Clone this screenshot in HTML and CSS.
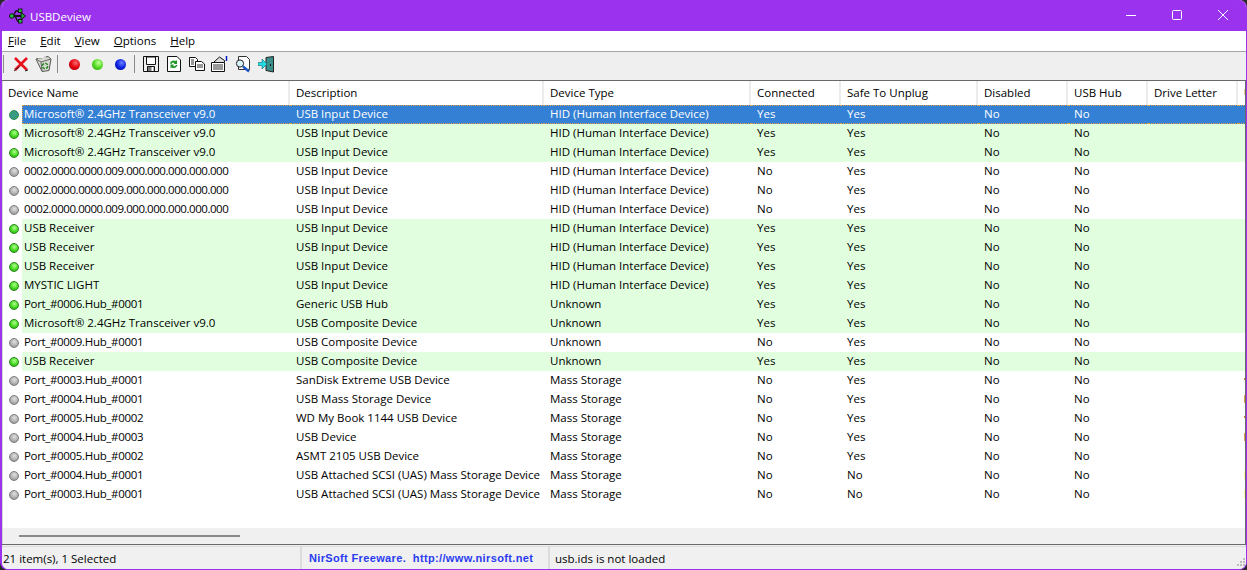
FILE: index.html
```html
<!DOCTYPE html>
<html lang="en">
<head>
<meta charset="utf-8">
<title>USBDeview</title>
<link rel="stylesheet" href="styles.css">
</head>
<body>
<div class="window">
  <header class="titlebar">
    <svg class="app-icon" width="17" height="16" viewBox="0 0 17 16">
      <path d="M2 8h12" stroke="#111" stroke-width="2"/>
      <path d="M12 4.500l4.500 3.500-4.500 3.500z" fill="#1fa838" stroke="#111"/>
      <path d="M4 8l3-5h3M6 8l2.500 5h2" fill="none" stroke="#111" stroke-width="1.300"/>
      <circle cx="2.800" cy="8" r="2.300" fill="#22c040" stroke="#111"/>
      <rect x="9.500" y="1" width="3.500" height="3.500" fill="#22c040" stroke="#111" stroke-width=".9"/>
      <rect x="9.500" y="11.500" width="3.500" height="3.500" fill="#22c040" stroke="#111" stroke-width=".9"/>
    </svg>
    <span class="title-text">USBDeview</span>
    <div class="win-controls">
      <svg class="win-btn" width="46" height="31" viewBox="0 0 46 31"><path d="M18 15.500h10" stroke="#fff"/></svg>
      <svg class="win-btn" width="46" height="31" viewBox="0 0 46 31"><rect x="18.500" y="10.500" width="9" height="9" rx="1" fill="none" stroke="#fff"/></svg>
      <svg class="win-btn" width="46" height="31" viewBox="0 0 46 31"><path d="M18 10l10 10M28 10l-10 10" stroke="#fff"/></svg>
    </div>
  </header>
  <nav class="menubar">
    <span class="menu"><u>F</u>ile</span>
    <span class="menu"><u>E</u>dit</span>
    <span class="menu"><u>V</u>iew</span>
    <span class="menu"><u>O</u>ptions</span>
    <span class="menu"><u>H</u>elp</span>
  </nav>
  <div class="toolbar">
    <span class="tsep first"></span>
    <div class="group g1">
      <span class="tbtn"><svg width="16" height="15" viewBox="0 0 16 15"><path d="M2 1l12 12M14 1L2 13" stroke="#e8101c" stroke-width="2.600"/><path d="M1 14l5-4M12 14l3-1" stroke="#222" stroke-width="1"/></svg></span>
      <span class="tbtn"><svg width="17" height="16" viewBox="0 0 17 16"><path d="M1 3l12-2.500L16 3l-2 11.500-7 1z" fill="#d9d9d2" stroke="#555"/><path d="M1 3l5 3 10-3M6 6l1 9" fill="none" stroke="#666"/><path d="M3 2l8-1" stroke="#fff"/><circle cx="10" cy="10" r="2.700" fill="none" stroke="#2a8a2a" stroke-width="1.600" stroke-dasharray="3 1.200"/></svg></span>
    </div>
    <span class="tsep"></span>
    <div class="group g2">
      <span class="tbtn"><span class="ball red"></span></span>
      <span class="tbtn"><span class="ball green"></span></span>
      <span class="tbtn"><span class="ball blue"></span></span>
    </div>
    <span class="tsep"></span>
    <div class="group g3">
      <span class="tbtn"><svg width="16" height="16" viewBox="0 0 16 16"><path d="M.5.500h15v15H.5z" fill="#efefef" stroke="#111"/><path d="M3.500 1v7.500h9V1z" fill="#fff" stroke="#111"/><path d="M4.500 10.500h7v5h-7z" fill="#777" stroke="#111"/><path d="M8.500 11h2v4h-2z" fill="#fff"/></svg></span>
      <span class="tbtn"><svg width="14" height="16" viewBox="0 0 14 16"><path d="M.5.500h9.500l3.500 3.500v11.500H.5z" fill="#fff" stroke="#111"/><path d="M3 7.500a4 3.500 0 0 1 6-2.500l1-1v4H6.500l1-1a2 2 0 0 0-3 1z" fill="#1f9a2a"/><path d="M10.500 9a4 3.500 0 0 1-6 2.500l-1 1V8.500H7l-1 1a2 2 0 0 0 3-.5z" fill="#1f9a2a"/></svg></span>
      <span class="tbtn"><svg width="16" height="14" viewBox="0 0 16 14"><path d="M.5.500h6l2 2v7H.5z" fill="#fff" stroke="#111"/><path d="M6.500 4.500h6l3 2.500v6.500h-9z" fill="#fff" stroke="#111"/><path d="M8 8h6M8 10h6M2 3h3M2 5h3M2 7h3" stroke="#333"/></svg></span>
      <span class="tbtn"><svg width="17" height="16" viewBox="0 0 17 16"><path d="M.5 6.500h13v9H.5z" fill="#fff" stroke="#111"/><path d="M2 9h10M2 11h10M2 13h10" stroke="#333"/><path d="M3 6l5.500-5 5 3.500V6" fill="#ddd" stroke="#111"/><path d="M15.500 0v5" stroke="#0018c8" stroke-width="1.500"/></svg></span>
      <span class="tbtn"><svg width="16" height="17" viewBox="0 0 16 17"><path d="M3.500.500h8l3 3v10h-11z" fill="#fff" stroke="#333"/><circle cx="5" cy="7.500" r="3.600" fill="#d8f2fb" stroke="#222"/><path d="M8 10.500l6 5" stroke="#1c55c8" stroke-width="2.400"/></svg></span>
      <span class="tbtn"><svg width="16" height="17" viewBox="0 0 16 17"><path d="M8 1.500l7.500-1V16L8 14.500z" fill="#3a8f8a" stroke="#222"/><path d="M0 6.500h4V3l5 5-5 5V9.500H0z" fill="#23dbe6" stroke="#0a6a70" stroke-width=".6"/><path d="M12.500 8v2" stroke="#111"/></svg></span>
    </div>
  </div>
  <section class="list">
    <div class="list-clip">
      <div class="row head">
        <div class="cell">Device Name</div><div class="cell">Description</div><div class="cell">Device Type</div><div class="cell">Connected</div><div class="cell">Safe To Unplug</div><div class="cell">Disabled</div><div class="cell">USB Hub</div><div class="cell">Drive Letter</div><div class="cell"><span class="tick head-tick"></span></div>
      </div>
      <div class="row selected"><div class="cell name"><span class="dot sel"></span><span class="label">Microsoft® 2.4GHz Transceiver v9.0</span></div><div class="cell">USB Input Device</div><div class="cell">HID (Human Interface Device)</div><div class="cell">Yes</div><div class="cell">Yes</div><div class="cell">No</div><div class="cell">No</div><div class="cell"></div><div class="cell"></div></div>
      <div class="row on"><div class="cell name"><span class="dot on"></span><span class="label">Microsoft® 2.4GHz Transceiver v9.0</span></div><div class="cell">USB Input Device</div><div class="cell">HID (Human Interface Device)</div><div class="cell">Yes</div><div class="cell">Yes</div><div class="cell">No</div><div class="cell">No</div><div class="cell"></div><div class="cell"></div></div>
      <div class="row on"><div class="cell name"><span class="dot on"></span><span class="label">Microsoft® 2.4GHz Transceiver v9.0</span></div><div class="cell">USB Input Device</div><div class="cell">HID (Human Interface Device)</div><div class="cell">Yes</div><div class="cell">Yes</div><div class="cell">No</div><div class="cell">No</div><div class="cell"></div><div class="cell"></div></div>
      <div class="row"><div class="cell name"><span class="dot off"></span><span class="label zeros">0002.0000.0000.009.000.000.000.000.000</span></div><div class="cell">USB Input Device</div><div class="cell">HID (Human Interface Device)</div><div class="cell">No</div><div class="cell">Yes</div><div class="cell">No</div><div class="cell">No</div><div class="cell"></div><div class="cell"></div></div>
      <div class="row"><div class="cell name"><span class="dot off"></span><span class="label zeros">0002.0000.0000.009.000.000.000.000.000</span></div><div class="cell">USB Input Device</div><div class="cell">HID (Human Interface Device)</div><div class="cell">No</div><div class="cell">Yes</div><div class="cell">No</div><div class="cell">No</div><div class="cell"></div><div class="cell"></div></div>
      <div class="row"><div class="cell name"><span class="dot off"></span><span class="label zeros">0002.0000.0000.009.000.000.000.000.000</span></div><div class="cell">USB Input Device</div><div class="cell">HID (Human Interface Device)</div><div class="cell">No</div><div class="cell">Yes</div><div class="cell">No</div><div class="cell">No</div><div class="cell"></div><div class="cell"></div></div>
      <div class="row on"><div class="cell name"><span class="dot on"></span><span class="label">USB Receiver</span></div><div class="cell">USB Input Device</div><div class="cell">HID (Human Interface Device)</div><div class="cell">Yes</div><div class="cell">Yes</div><div class="cell">No</div><div class="cell">No</div><div class="cell"></div><div class="cell"></div></div>
      <div class="row on"><div class="cell name"><span class="dot on"></span><span class="label">USB Receiver</span></div><div class="cell">USB Input Device</div><div class="cell">HID (Human Interface Device)</div><div class="cell">Yes</div><div class="cell">Yes</div><div class="cell">No</div><div class="cell">No</div><div class="cell"></div><div class="cell"></div></div>
      <div class="row on"><div class="cell name"><span class="dot on"></span><span class="label">USB Receiver</span></div><div class="cell">USB Input Device</div><div class="cell">HID (Human Interface Device)</div><div class="cell">Yes</div><div class="cell">Yes</div><div class="cell">No</div><div class="cell">No</div><div class="cell"></div><div class="cell"></div></div>
      <div class="row on"><div class="cell name"><span class="dot on"></span><span class="label">MYSTIC LIGHT</span></div><div class="cell">USB Input Device</div><div class="cell">HID (Human Interface Device)</div><div class="cell">Yes</div><div class="cell">Yes</div><div class="cell">No</div><div class="cell">No</div><div class="cell"></div><div class="cell"></div></div>
      <div class="row on"><div class="cell name"><span class="dot on"></span><span class="label port">Port_#0006.Hub_#0001</span></div><div class="cell">Generic USB Hub</div><div class="cell">Unknown</div><div class="cell">Yes</div><div class="cell">Yes</div><div class="cell">No</div><div class="cell">No</div><div class="cell"></div><div class="cell"></div></div>
      <div class="row on"><div class="cell name"><span class="dot on"></span><span class="label">Microsoft® 2.4GHz Transceiver v9.0</span></div><div class="cell">USB Composite Device</div><div class="cell">Unknown</div><div class="cell">Yes</div><div class="cell">Yes</div><div class="cell">No</div><div class="cell">No</div><div class="cell"></div><div class="cell"></div></div>
      <div class="row"><div class="cell name"><span class="dot off"></span><span class="label port">Port_#0009.Hub_#0001</span></div><div class="cell">USB Composite Device</div><div class="cell">Unknown</div><div class="cell">No</div><div class="cell">Yes</div><div class="cell">No</div><div class="cell">No</div><div class="cell"></div><div class="cell"></div></div>
      <div class="row on"><div class="cell name"><span class="dot on"></span><span class="label">USB Receiver</span></div><div class="cell">USB Composite Device</div><div class="cell">Unknown</div><div class="cell">Yes</div><div class="cell">Yes</div><div class="cell">No</div><div class="cell">No</div><div class="cell"></div><div class="cell"></div></div>
      <div class="row"><div class="cell name"><span class="dot off"></span><span class="label port">Port_#0003.Hub_#0001</span></div><div class="cell">SanDisk Extreme USB Device</div><div class="cell">Mass Storage</div><div class="cell">No</div><div class="cell">Yes</div><div class="cell">No</div><div class="cell">No</div><div class="cell"></div><div class="cell"><span class="tick small"></span></div></div>
      <div class="row"><div class="cell name"><span class="dot off"></span><span class="label port">Port_#0004.Hub_#0001</span></div><div class="cell">USB Mass Storage Device</div><div class="cell">Mass Storage</div><div class="cell">No</div><div class="cell">Yes</div><div class="cell">No</div><div class="cell">No</div><div class="cell"></div><div class="cell"><span class="tick tall"></span></div></div>
      <div class="row"><div class="cell name"><span class="dot off"></span><span class="label port">Port_#0005.Hub_#0002</span></div><div class="cell">WD My Book 1144 USB Device</div><div class="cell">Mass Storage</div><div class="cell">No</div><div class="cell">Yes</div><div class="cell">No</div><div class="cell">No</div><div class="cell"></div><div class="cell"><span class="tick small"></span></div></div>
      <div class="row"><div class="cell name"><span class="dot off"></span><span class="label port">Port_#0004.Hub_#0003</span></div><div class="cell">USB Device</div><div class="cell">Mass Storage</div><div class="cell">No</div><div class="cell">Yes</div><div class="cell">No</div><div class="cell">No</div><div class="cell"></div><div class="cell"><span class="tick tall"></span></div></div>
      <div class="row"><div class="cell name"><span class="dot off"></span><span class="label port">Port_#0005.Hub_#0002</span></div><div class="cell">ASMT 2105 USB Device</div><div class="cell">Mass Storage</div><div class="cell">No</div><div class="cell">Yes</div><div class="cell">No</div><div class="cell">No</div><div class="cell"></div><div class="cell"></div></div>
      <div class="row"><div class="cell name"><span class="dot off"></span><span class="label port">Port_#0004.Hub_#0001</span></div><div class="cell">USB Attached SCSI (UAS) Mass Storage Device</div><div class="cell">Mass Storage</div><div class="cell">No</div><div class="cell">No</div><div class="cell">No</div><div class="cell">No</div><div class="cell"></div><div class="cell"><span class="tick yellow"></span></div></div>
      <div class="row"><div class="cell name"><span class="dot off"></span><span class="label port">Port_#0003.Hub_#0001</span></div><div class="cell">USB Attached SCSI (UAS) Mass Storage Device</div><div class="cell">Mass Storage</div><div class="cell">No</div><div class="cell">No</div><div class="cell">No</div><div class="cell">No</div><div class="cell"></div><div class="cell"><span class="tick yellow"></span></div></div>
    </div>
    <div class="hscroll"><span class="thumb"></span></div>
  </section>
  <footer class="statusbar">
    <div class="pane count">21 item(s), 1 Selected</div>
    <div class="pane link">NirSoft Freeware.&nbsp; http://www.nirsoft.net</div>
    <div class="pane info">usb.ids is not loaded</div>
    <svg class="grip" width="9" height="9" viewBox="0 0 9 9"><path d="M6 0h2v2H6zM3 3h2v2H3zM6 3h2v2H6zM0 6h2v2H0zM3 6h2v2H3zM6 6h2v2H6z" fill="#bdbdbd"/></svg>
  </footer>
</div>
</body>
</html>
```
FILE: styles.css
```css
* { box-sizing: border-box; }
html, body { margin: 0; padding: 0; height: 100%; overflow: hidden; background: #2a2a2a; }
body { font: 11.5px "Open Sans", "Liberation Sans", sans-serif; color: #000; }
.window { width: 1247px; height: 570px; background: #f0f0f0; border: solid #9b33ee; border-width: 0 1px 1px 2px; border-radius: 8px; display: flex; flex-direction: column; overflow: hidden; }
.titlebar { height: 31px; flex: none; margin: 0 -1px 0 -2px; background: #9b33ee; color: #fff; display: flex; align-items: center; padding: 1px 1px 0 9px; }
.app-icon { margin-right: 4px; }
.title-text { font-size: 11.5px; }
.win-controls { margin: -1px 0 0 auto; display: flex; }
.win-btn { display: block; }
.menubar { height: 20px; flex: none; background: #fff; display: flex; align-items: center; padding: 0 0 1px 6px; gap: 14px; }
.toolbar { height: 30px; flex: none; background: #efefef; border-top: 1px solid #a5a5a5; border-bottom: 1px solid #696969; display: flex; align-items: center; padding: 0 0 4px 1px; }
.tsep { width: 1px; height: 18px; background: #8a8a8a; }
.group { display: flex; align-items: center; }
.g1 { margin: 0 2px 0 5px; }
.g2 { margin: 0 2px 0 5px; }
.g3 { margin-left: 4px; }
.tbtn { width: 23px; height: 18px; display: flex; align-items: center; justify-content: center; }
.tbtn svg { display: block; }
.ball { width: 11px; height: 11px; border-radius: 50%; }
.ball.red { background: radial-gradient(circle at 60% 35%, #ff6a6a, #e0000e 50%, #a0000a); }
.ball.green { background: radial-gradient(circle at 60% 35%, #c4ff9a, #4fdb20 50%, #2f9a10); }
.ball.blue { background: radial-gradient(circle at 60% 35%, #6a80ff, #0c1fe0 50%, #05109a); }
.list { flex: 1; min-height: 0; display: flex; flex-direction: column; background: #fff; border-left: 1px solid #d4d4d4; border-right: 1px solid #696969; }
.list-clip { flex: 1; min-height: 0; overflow: hidden; }
.row { display: grid; grid-template-columns: 287px 254px 207px 90px 137px 90px 80px 90px 90px; height: 19px; line-height: 18px; white-space: nowrap; }
.row.head { height: 24px; line-height: 24px; background: #fff; }
.row.head .cell { border-right: 2px solid #ececec; padding-left: 6px; }
.row.head .cell:first-child { padding-left: 5px; }
.row.on .cell:not(.name), .row.on .label { background: #e1ffdf; }
.row.selected { color: #fff; }
.row.selected .cell:not(.name), .row.selected .label { background: #3480d4; border-top: 1px dotted #e6a040; border-bottom: 1px dotted #e6a040; line-height: 16px; }
.row.selected .label { border-left: 1px dotted #e6a040; padding-left: 1px; }
.cell { padding-left: 6px; overflow: hidden; }
.cell.name { display: flex; align-items: center; padding-left: 6px; }
.label { flex: 1; height: 19px; padding-left: 2px; }
.zeros { letter-spacing: -.45px; }
.port { letter-spacing: -.33px; }
.dot { width: 10px; height: 10px; border-radius: 50%; flex: none; margin-right: 3px; }
.dot.on { background: radial-gradient(circle at 55% 35%, #b0ff90, #46d820 55%, #1f8f10); border: 1px solid #2a8a1a; }
.dot.off { background: radial-gradient(circle at 55% 35%, #e0e0e0, #b0b0b0 55%, #808080); border: 1px solid #7d7d7d; }
.dot.sel { background: repeating-conic-gradient(#2a70d0 0 25%, #46c830 0 50%) 0 0 / 2px 2px; border: 1px solid #2a8a50; }
.tick { display: block; width: 1px; background: #d98a20; }
.tick.small { height: 2px; margin-top: 7px; background: #c87820; }
.tick.tall { height: 8px; margin-top: 5px; background: #e0a050; }
.tick.yellow { height: 8px; margin-top: 5px; background: #fff6a0; }
.tick.head-tick { height: 6px; margin-top: 8px; background: #e8c890; }
.hscroll { height: 16px; flex: none; background: #f0f0f0; display: flex; align-items: center; }
.thumb { width: 221px; height: 2px; background: #8a8a8a; margin-left: 16px; }
.statusbar { height: 25px; flex: none; background: #f0f0f0; border-top: 1px solid #696969; display: flex; box-shadow: inset 0 1px 0 #f0f0f0, inset 0 2px 0 #dcdcdc; padding-top: 2px; }
.pane { height: 22px; line-height: 23px; white-space: nowrap; }
.count { width: 298px; padding-left: 1px; }
.link { width: 250px; padding-left: 7px; border-left: 2px solid #dcdcdc; border-right: 2px solid #dcdcdc; color: #2a3cf0; font: bold 11px/23px "Liberation Sans", sans-serif; letter-spacing: .35px; }
.info { padding-left: 5px; }
.grip { margin: 11px 0 0 auto; display: block; }
```
